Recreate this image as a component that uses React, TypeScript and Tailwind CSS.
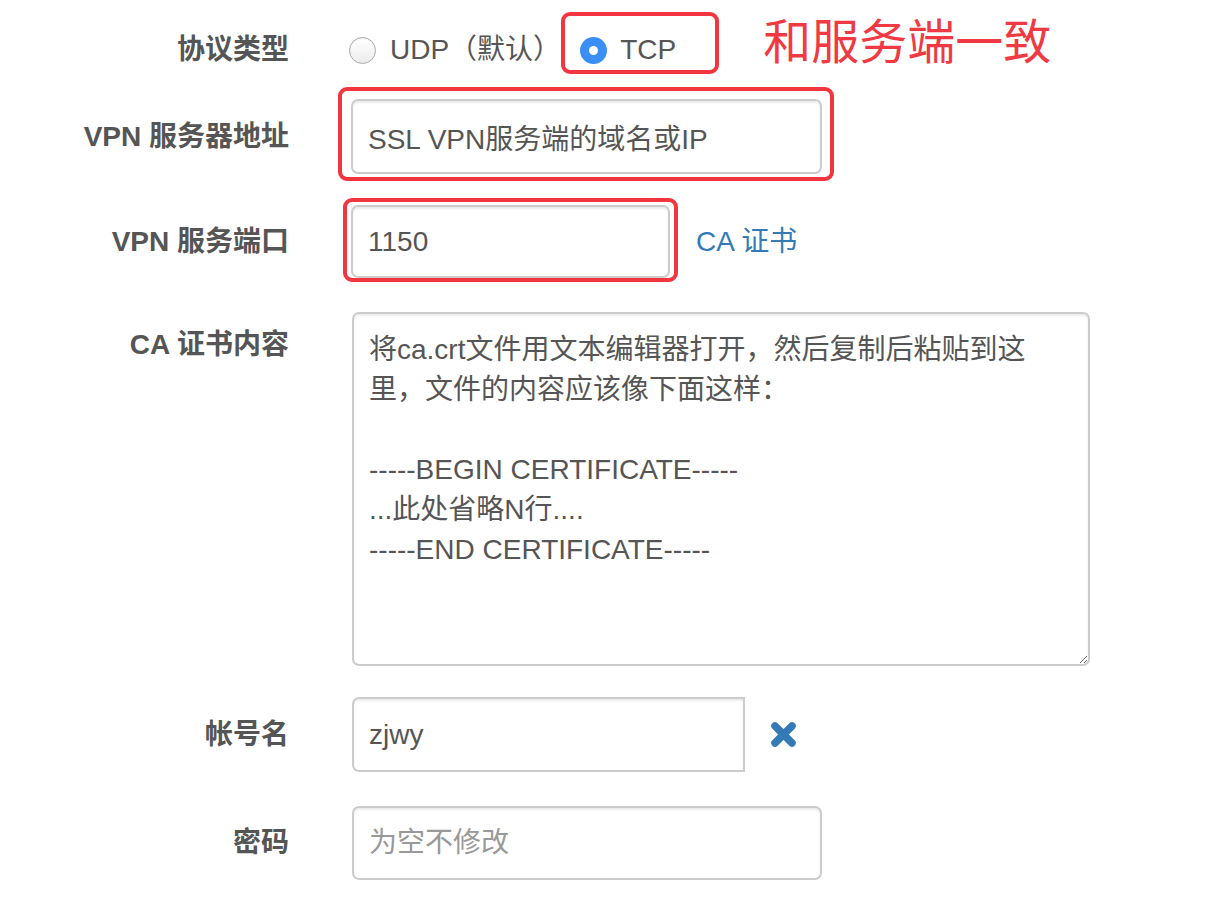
import React from "react";

const RED = "border-[#f2353f]";

function Label({ children, className = "" }: { children: React.ReactNode; className?: string }) {
  return (
    <div
      className={
        "w-[289px] shrink-0 text-right font-bold text-[28px] leading-[40px] text-[#555] " + className
      }
    >
      {children}
    </div>
  );
}

const inputCls =
  "block border-2 border-[#ccc] bg-white px-[15px] text-[28px] text-[#555] shadow-[inset_0_2px_2px_rgba(0,0,0,0.075)] outline-none placeholder:text-[#999] font-['Liberation_Sans','Noto_Sans_CJK_SC',sans-serif]";

export default function App() {
  return (
    <div className="min-h-screen bg-white pt-[13px] font-['Liberation_Sans','Noto_Sans_CJK_SC',sans-serif]">
      {/* Row 1: protocol */}
      <div className="flex h-[74px] items-center">
        <Label>协议类型</Label>
        <div className="ml-[60px] flex items-center text-[28px] text-[#555]">
          <div className="flex items-center">
            <span className="h-[27px] w-[27px] rounded-full border-[1.5px] border-[#aaa] bg-gradient-to-b from-white to-[#ececec] shadow-[inset_0_1px_1px_rgba(0,0,0,0.05)]" />
            <span className="ml-[14px] leading-[40px]">UDP（默认）</span>
          </div>
          <div className="relative ml-[19px] flex h-[40px] items-center">
            <span className="flex h-[27px] w-[27px] items-center justify-center rounded-full bg-[#3a8ef6]">
              <span className="h-[9px] w-[9px] rounded-full bg-white" />
            </span>
            <span className="ml-[13px] leading-[40px]">TCP</span>
            <div
              className={
                "pointer-events-none absolute -top-[18px] -bottom-[4px] -left-[19px] -right-[43px] rounded-[9px] border-4 " +
                RED
              }
            />
          </div>
          <div className="mb-[14px] ml-[87px] text-[48px] leading-none text-[#ef3a44]">
            和服务端一致
          </div>
        </div>
      </div>

      {/* Row 2: server address */}
      <div className="mt-[12px] flex items-center">
        <Label>VPN 服务器地址</Label>
        <div className="relative ml-[62px]">
          <input
            readOnly
            defaultValue="SSL VPN服务端的域名或IP"
            className={inputCls + " h-[75px] w-[471px] rounded-[7px]"}
          />
          <div
            className={
              "pointer-events-none absolute -top-[12px] -bottom-[7px] -left-[13px] -right-[12px] rounded-[9px] border-4 " +
              RED
            }
          />
        </div>
      </div>

      {/* Row 3: port */}
      <div className="mt-[31px] flex items-center">
        <Label>VPN 服务端口</Label>
        <div className="relative ml-[62px]">
          <input
            readOnly
            defaultValue="1150"
            className={inputCls + " h-[73px] w-[319px] rounded-[7px]"}
          />
          <div
            className={
              "pointer-events-none absolute -top-[7px] -bottom-[4px] -left-[8px] -right-[8px] rounded-[9px] border-4 " +
              RED
            }
          />
        </div>
        <a className="ml-[26px] text-[28px] leading-[40px] text-[#337ab7]">CA 证书</a>
      </div>

      {/* Row 4: CA content */}
      <div className="mt-[34px] flex items-start">
        <Label className="pt-[13px]">CA 证书内容</Label>
        <textarea
          readOnly
          defaultValue={
            "将ca.crt文件用文本编辑器打开，然后复制后粘贴到这\n里，文件的内容应该像下面这样：\n\n-----BEGIN CERTIFICATE-----\n...此处省略N行....\n-----END CERTIFICATE-----"
          }
          className={
            inputCls +
            " ml-[63px] h-[354px] w-[738px] rounded-[7px] py-[16px] leading-[40px] whitespace-pre-wrap"
          }
        />
      </div>

      {/* Row 5: username */}
      <div className="mt-[31px] flex items-center">
        <Label>帐号名</Label>
        <input
          readOnly
          defaultValue="zjwy"
          className={inputCls + " ml-[63px] h-[75px] w-[393px] rounded-l-[7px] rounded-r-none"}
        />
        <svg className="ml-[25px]" width="27" height="27" viewBox="0 0 27 27">
          <g stroke="#337ab7" strokeWidth="7.5" strokeLinecap="round">
            <line x1="5" y1="5" x2="22" y2="22" />
            <line x1="22" y1="5" x2="5" y2="22" />
          </g>
        </svg>
      </div>

      {/* Row 6: password */}
      <div className="mt-[34px] flex items-center">
        <Label>密码</Label>
        <input
          placeholder="为空不修改"
          className={inputCls + " ml-[63px] h-[74px] w-[470px] rounded-[7px]"}
        />
      </div>
    </div>
  );
}
